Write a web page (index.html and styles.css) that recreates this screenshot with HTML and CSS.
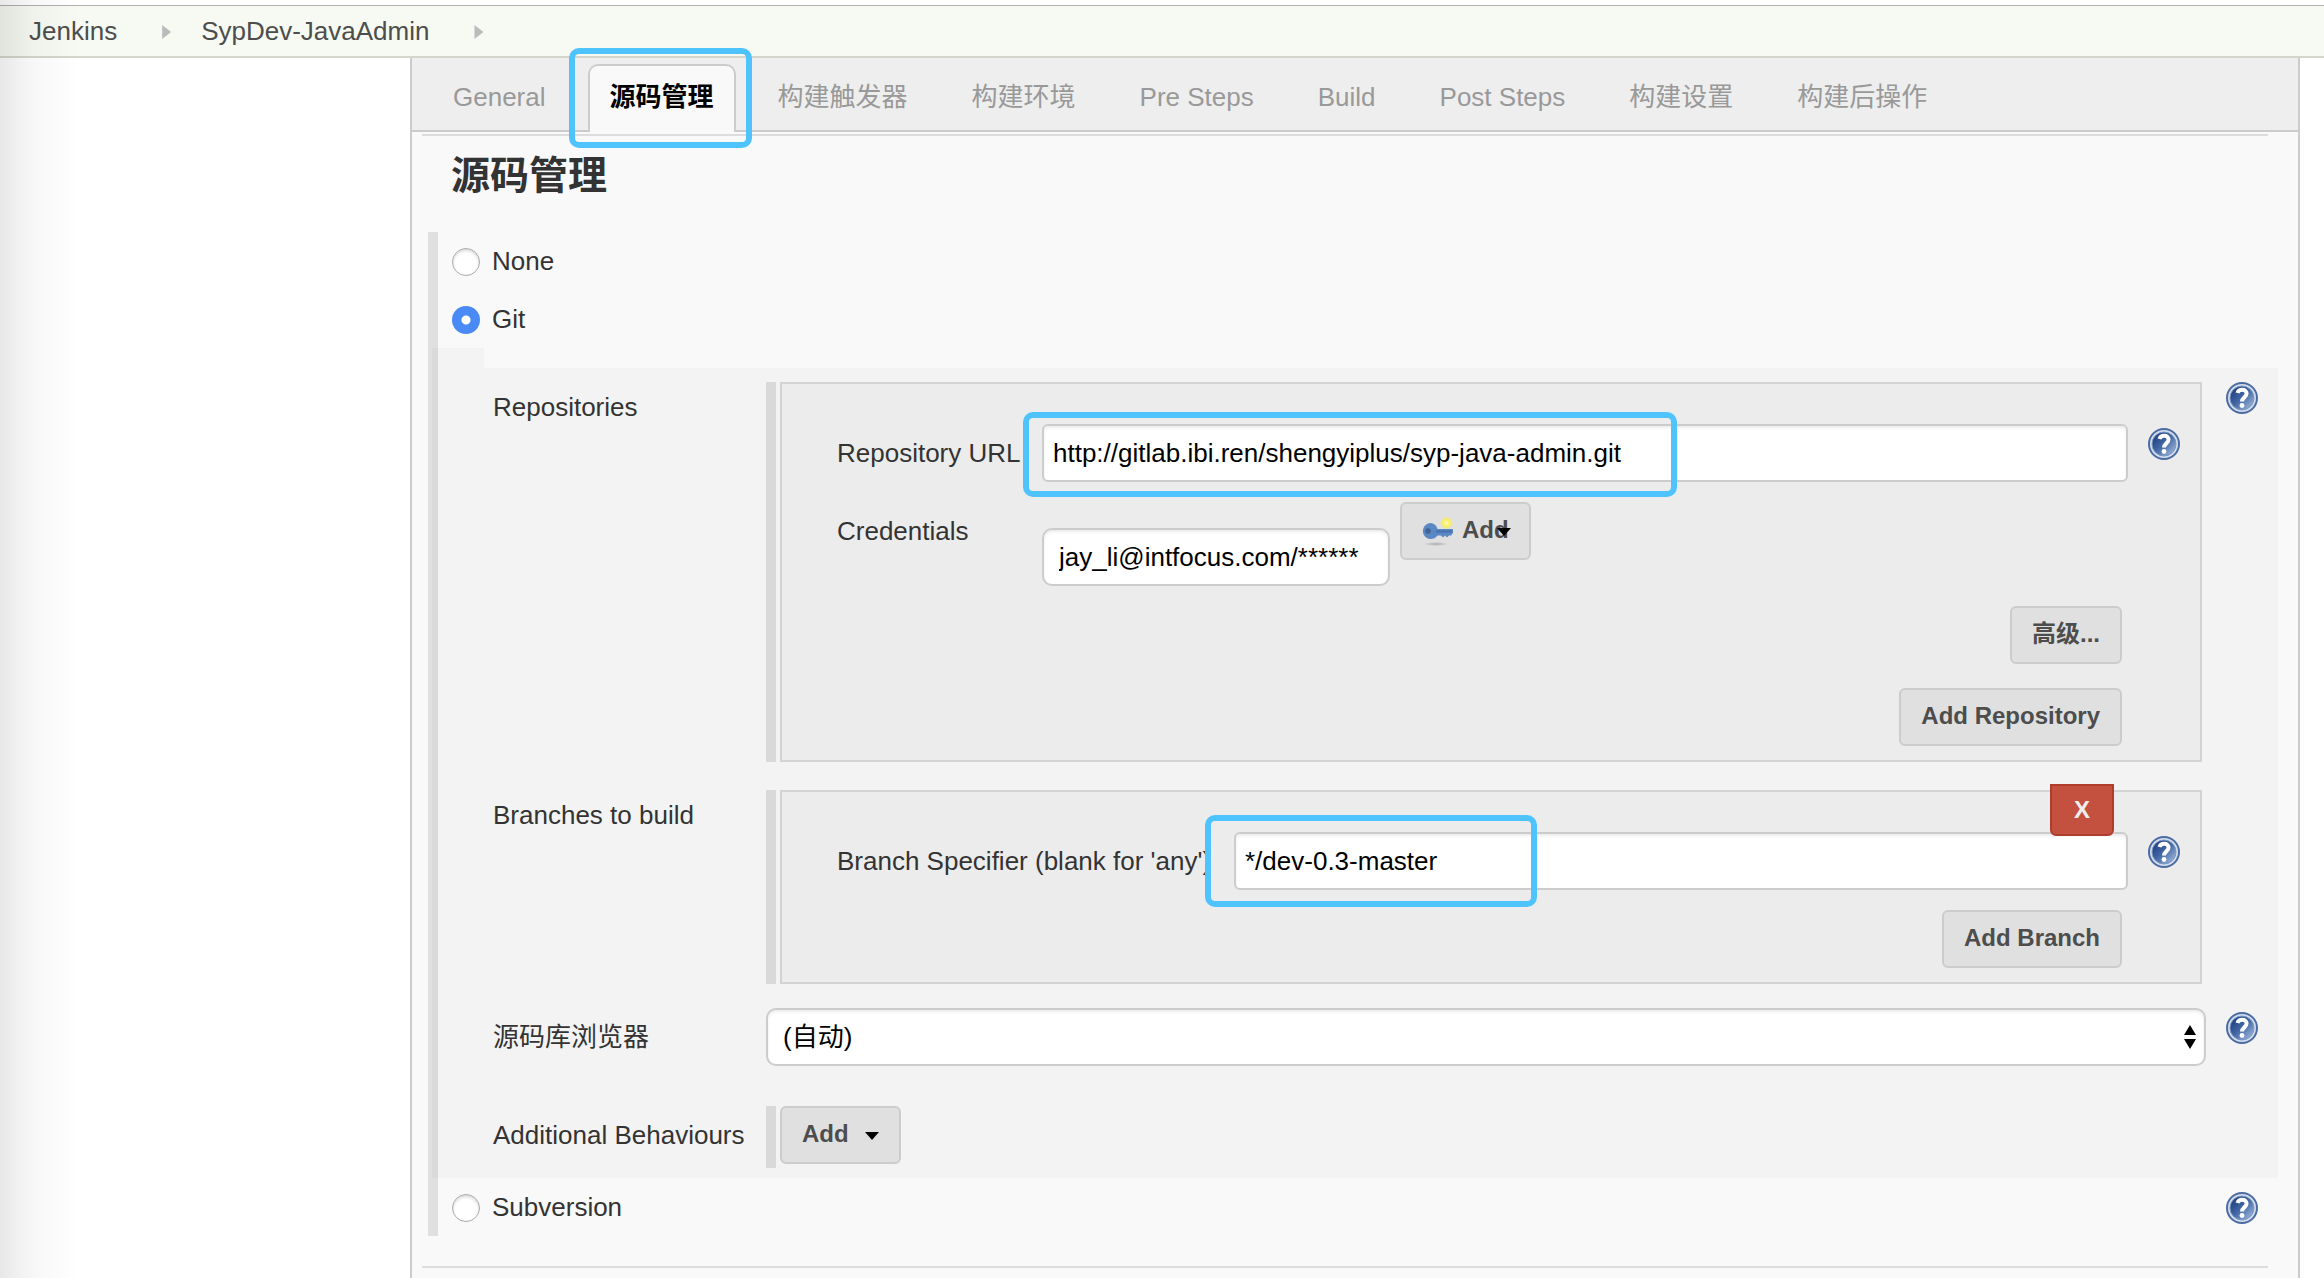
FILE: index.html
```html
<!DOCTYPE html>
<html lang="zh-CN">
<head>
<meta charset="utf-8">
<meta name="viewport" content="width=device-width, initial-scale=1">
<title>SypDev-JavaAdmin Config [Jenkins]</title>
<link rel="stylesheet" href="styles.css">
</head>
<body>
<svg class="defs" aria-hidden="true">
  <defs>
    <linearGradient id="helpFill" x1="0" y1="0" x2="1" y2="1">
      <stop offset="0.15" stop-color="#1f4480"/>
      <stop offset="0.5" stop-color="#4469a6"/>
      <stop offset="0.9" stop-color="#9bb3d8"/>
    </linearGradient>
    <radialGradient id="shade">
      <stop offset="0" stop-color="#000" stop-opacity="0.25"/>
      <stop offset="1" stop-color="#000" stop-opacity="0"/>
    </radialGradient>
    <radialGradient id="glow">
      <stop offset="0" stop-color="#fffbb0"/>
      <stop offset="0.6" stop-color="#f8ee62"/>
      <stop offset="1" stop-color="#f8ee62" stop-opacity="0"/>
    </radialGradient>
    <symbol id="help" viewBox="0 0 32 32">
      <circle cx="16" cy="16" r="15" fill="#d3ddec" stroke="#4a6ca3" stroke-width="2"/>
      <circle cx="16" cy="16" r="12" fill="url(#helpFill)" stroke="#7d97c2" stroke-width="1"/>
      <path d="M11.500 11C12.500 6.800 20.600 6.600 20.600 11.500C20.600 15 16.200 15.500 16 19.500" fill="none" stroke="#fff" stroke-width="4"/>
      <circle cx="16" cy="23.500" r="2.400" fill="#fff"/>
    </symbol>
  </defs>
</svg>

<nav class="breadcrumbs" aria-label="Breadcrumb">
  <a href="#">Jenkins</a>
  <span class="crumb-arrow"></span>
  <a href="#">SypDev-JavaAdmin</a>
  <span class="crumb-arrow"></span>
</nav>

<div class="page">
  <main class="config">
    <nav class="tabs">
      <a class="tab" href="#">General</a>
      <a class="tab active" href="#">源码管理<span class="mark mark-tab"></span></a>
      <a class="tab" href="#">构建触发器</a>
      <a class="tab" href="#">构建环境</a>
      <a class="tab" href="#">Pre Steps</a>
      <a class="tab" href="#">Build</a>
      <a class="tab" href="#">Post Steps</a>
      <a class="tab" href="#">构建设置</a>
      <a class="tab" href="#">构建后操作</a>
    </nav>

    <form class="form">
      <hr class="rule">
      <h2>源码管理</h2>

      <div class="choices">
        <div class="choice">
          <input type="radio" name="scm" id="scm-none"><label for="scm-none">None</label>
        </div>
        <div class="choice">
          <input type="radio" name="scm" id="scm-git" checked><label for="scm-git">Git</label>
        </div>

        <div class="notch"></div>
        <section class="git">
          <div class="row">
            <span class="label label-top">Repositories</span>
            <div class="chunk">
              <div class="box">
                <div class="field">
                  <label class="label label-repo" for="repo-url">Repository URL</label>
                  <div class="control">
                    <input class="text" id="repo-url" type="text" value="http://gitlab.ibi.ren/shengyiplus/syp-java-admin.git">
                    <span class="mark mark-url"></span>
                  </div>
                  <a class="help" href="#" aria-label="Help"><svg><use href="#help"/></svg></a>
                </div>
                <div class="field field-credentials">
                  <label class="label label-repo" for="credentials">Credentials</label>
                  <select class="select credentials" id="credentials"><option>jay_li@intfocus.com/******</option></select>
                  <button class="button add-key" type="button">
                    <svg class="key" viewBox="0 0 32 32" aria-hidden="true">
                      <ellipse cx="14" cy="30" rx="12" ry="2" fill="url(#shade)"/>
                      <path d="M9 9a8 8 0 1 0 6.500 12.500H19l2 2 2-2 2 2 2-2h2l2-2.500V15H15.500A8 8 0 0 0 9 9z" fill="#5b87c2"/>
                      <path d="M14 17.500H30" stroke="#4470ae" stroke-width="2"/>
                      <circle cx="6" cy="17" r="2.800" fill="#3f6499"/>
                      <circle cx="24.500" cy="9" r="6.500" fill="url(#glow)"/>
                    </svg>
                    Add
                    <svg class="caret caret-over" viewBox="0 0 14 8" aria-hidden="true"><path d="M0 0H14L7 8z"/></svg>
                  </button>
                </div>
                <div class="actions">
                  <button class="button" type="button">高级...</button>
                  <button class="button" type="button">Add Repository</button>
                </div>
              </div>
            </div>
            <a class="help" href="#" aria-label="Help"><svg><use href="#help"/></svg></a>
          </div>

          <div class="row row-branches">
            <span class="label label-top">Branches to build</span>
            <div class="chunk">
              <div class="box">
                <button class="delete" type="button">X</button>
                <div class="field">
                  <label class="label label-branch" for="branch">Branch Specifier (blank for 'any')</label>
                  <div class="control">
                    <input class="text" id="branch" type="text" value="*/dev-0.3-master">
                    <span class="mark mark-branch"></span>
                  </div>
                  <a class="help" href="#" aria-label="Help"><svg><use href="#help"/></svg></a>
                </div>
                <div class="actions">
                  <button class="button" type="button">Add Branch</button>
                </div>
              </div>
            </div>
          </div>

          <div class="row row-browser">
            <label class="label" for="browser">源码库浏览器</label>
            <div class="control">
              <select class="select" id="browser"><option>(自动)</option></select>
              <svg class="updown" viewBox="0 0 12 24" aria-hidden="true"><path d="M0 10H12L6 0zM0 14H12L6 24z"/></svg>
            </div>
            <a class="help" href="#" aria-label="Help"><svg><use href="#help"/></svg></a>
          </div>

          <div class="row row-behaviours">
            <span class="label">Additional Behaviours</span>
            <div class="chunk chunk-button">
              <button class="button add-menu" type="button">Add
                <svg class="caret" viewBox="0 0 14 8" aria-hidden="true"><path d="M0 0H14L7 8z"/></svg>
              </button>
            </div>
          </div>
        </section>

        <div class="choice">
          <input type="radio" name="scm" id="scm-svn"><label for="scm-svn">Subversion</label>
          <a class="help" href="#" aria-label="Help"><svg><use href="#help"/></svg></a>
        </div>
      </div>
      <hr class="rule">
    </form>
  </main>
</div>
</body>
</html>
```
FILE: styles.css
```css
* { box-sizing: border-box; }

body {
  margin: 0;
  padding-top: 5px;
  min-height: 100vh;
  display: flex;
  flex-direction: column;
  position: relative;
  background: #fff;
  color: #333;
  font: 26px/30px "Liberation Sans", "Noto Sans CJK SC", sans-serif;
}

/* soft shadow that falls over the left edge of the window */
body::after {
  content: "";
  position: absolute;
  top: 0;
  bottom: 0;
  left: 0;
  width: 80px;
  background: linear-gradient(to right, rgba(0, 0, 0, .09), rgba(0, 0, 0, .03) 40%, transparent);
  pointer-events: none;
}

a { color: inherit; text-decoration: none; }
button, input, select { font: inherit; margin: 0; }
.defs { position: absolute; width: 0; height: 0; }

.breadcrumbs {
  display: flex;
  align-items: center;
  height: 53px;
  padding: 0 29px;
  border-top: 1px solid #b0b0b0;
  border-bottom: 2px solid #d3d6cb;
  background: #f6faf2;
  color: #4d4d4d;
}
.crumb-arrow {
  width: 9px;
  height: 14px;
  margin: 2px 30px 0 45px;
  background: #bbb;
  clip-path: polygon(0 0, 100% 50%, 0 100%);
}

.page {
  flex: 1;
  display: flex;
  padding: 0 24px 0 410px;
}
.config {
  flex: 1;
  min-width: 0;
  border: solid #ccc;
  border-width: 0 2px;
  background: #f9f9f9;
}

.tabs {
  display: flex;
  align-items: flex-end;
  gap: 20px;
  height: 74px;
  padding: 0 19px;
  border-bottom: 2px solid #ccc;
  background: #eee;
  color: #999;
}
.tab {
  position: relative;
  height: 68px;
  margin-bottom: -2px;
  padding: 0 20px;
  border: 2px solid transparent;
  border-bottom: 0;
  border-radius: 10px 10px 0 0;
  line-height: 62px;
  white-space: nowrap;
}
.tab.active {
  border-color: #ccc;
  background: #f9f9f9;
  color: #000;
  font-weight: bold;
}

.form { padding: 2px 20px 10px 10px; }
.rule {
  height: 2px;
  margin: 0 10px 0 0;
  border: 0;
  background: #ddd;
}
h2 {
  margin: 10px 29px 26px;
  font-size: 39px;
  line-height: 60px;
}

/* annotation frames */
.mark {
  position: absolute;
  z-index: 1;
  border: 6px solid #4fc3fd;
  border-radius: 10px;
  pointer-events: none;
}
.mark-tab { inset: -18px -18px -16px -21px; }
.mark-url { top: -12px; left: -19px; width: 654px; height: 85px; }
.mark-branch { top: -17px; left: -29px; width: 332px; height: 92px; }

.choices {
  margin: 0 0 30px 6px;
  border-left: 10px solid #e0e0e0;
}
.choice {
  display: flex;
  align-items: center;
  gap: 12px;
  height: 58px;
  padding: 2px 20px 0 14px;
}
.choice label { padding-bottom: 2px; }
.choice .help { margin-left: auto; }

input[type="radio"] {
  appearance: none;
  width: 28px;
  height: 28px;
  border: 1px solid #aaa;
  border-radius: 50%;
  background: #fff;
  box-shadow: inset 0 2px 3px rgba(0, 0, 0, .15);
}
input[type="radio"]:checked {
  border: 0;
  background: radial-gradient(circle, #fff 4px, #4a8af4 5px);
  box-shadow: none;
}

.notch, .git {
  margin-left: -6px;
  background: rgba(0, 0, 0, .024);
}
.notch { width: 52px; height: 20px; }
.git { padding: 14px 20px 10px 61px; }

.row {
  display: grid;
  grid-template-columns: 273px minmax(0, 1fr) 52px;
}
.row > .help { justify-self: end; }
.row-branches { margin-top: 28px; }
.row-browser { margin-top: 24px; }
.row-browser .help { margin-top: 4px; }
.row-behaviours { margin-top: 40px; }

.label { line-height: 58px; white-space: nowrap; }
.label-top { padding-top: 10px; line-height: 30px; }
.label-repo { width: 205px; }
.label-branch { width: 397px; }

.chunk {
  padding-left: 4px;
  margin-right: 4px;
  border-left: 10px solid #d9d9d9;
}
.chunk-button { padding-bottom: 4px; }
.box {
  position: relative;
  padding: 40px 20px 14px 55px;
  border: 2px solid #d3d3d3;
  background: #ececec;
}
.field { display: flex; align-items: flex-start; }
.field .help { margin: 4px 0 0 20px; }
.field-credentials { margin-top: 20px; }
.control { position: relative; flex: 1; min-width: 0; }

.text, .select {
  display: block;
  width: 100%;
  height: 58px;
  border: 2px solid #ccc;
  border-radius: 6px;
  background: #fff;
  box-shadow: inset 0 2px 3px rgba(0, 0, 0, .08);
  color: #000;
}
.text { padding: 0 9px; }
.select { appearance: none; padding: 0 15px; border-radius: 10px; }
.credentials { width: 348px; margin: 26px 10px 0 0; }
.updown {
  position: absolute;
  top: 17px;
  right: 10px;
  width: 12px;
  height: 24px;
}

.button, .delete {
  border: 2px solid #ccc;
  border-radius: 6px;
  background: #e0e0e0;
  color: #4d4d4d;
  font-size: 24px;
  font-weight: bold;
}
.button { height: 58px; padding: 0 20px 2px; }
.actions {
  display: flex;
  flex-direction: column;
  align-items: flex-end;
  gap: 24px;
  padding: 20px 58px 0 0;
}
.delete {
  position: absolute;
  top: -8px;
  right: 86px;
  z-index: 1;
  width: 64px;
  height: 52px;
  padding: 0;
  border-color: #ae3d2e;
  border-radius: 0 0 6px 6px;
  background: #c4513f;
  color: #eee;
}
.add-key, .add-menu { display: flex; align-items: center; }
.add-key { position: relative; gap: 8px; }
.add-menu { gap: 16px; }
.key { width: 32px; height: 32px; }
.caret { width: 14px; height: 8px; margin-top: 4px; }
.caret-over { position: absolute; top: 20px; right: 18px; }

.help, .help svg { display: block; width: 32px; height: 32px; }
```
